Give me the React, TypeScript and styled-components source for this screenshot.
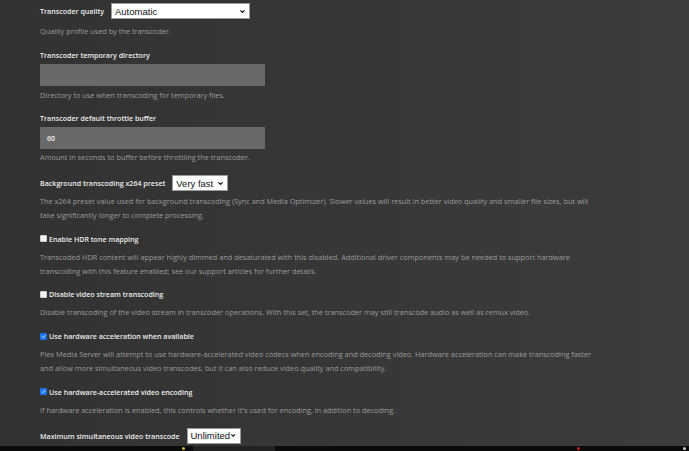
import styled, { createGlobalStyle } from 'styled-components';
import { ChevronDown } from 'lucide-react';

const GlobalStyle = createGlobalStyle`
  html, body {
    margin: 0;
    padding: 0;
    height: 100%;
  }
  body {
    background: #333;
    font-family: "Open Sans", "Noto Sans", sans-serif;
  }
  #root {
    height: 100%;
  }
`;

interface SelectProps {
  value: string;
  width: number;
}

function Select({ value, width }: SelectProps) {
  return (
    <SelectBox $width={width}>
      <span>{value}</span>
      <ChevronDown size={7} strokeWidth={4} color="#111" />
    </SelectBox>
  );
}

interface CheckProps {
  checked?: boolean;
}

function Check({ checked }: CheckProps) {
  return (
    <CheckBox $checked={checked}>
      {checked && (
        <svg width="7" height="7" viewBox="0 0 10 10">
          <path d="M2 5.2 L4.2 7.4 L8.2 2.6" fill="none" stroke="#fff" strokeWidth="1.8" />
        </svg>
      )}
    </CheckBox>
  );
}

export default function App() {
  return (
    <>
      <GlobalStyle />
      <Screen>
        <Content>
          <Group>
            <InlineRow>
              <Label>Transcoder quality</Label>
              <Select value="Automatic" width={139} />
            </InlineRow>
            <Help $top={5}>Quality profile used by the transcoder.</Help>
          </Group>

          <Group>
            <Label>Transcoder temporary directory</Label>
            <TextField />
            <Help $top={2}>Directory to use when transcoding for temporary files.</Help>
          </Group>

          <Group>
            <Label>Transcoder default throttle buffer</Label>
            <TextField>60</TextField>
            <Help $top={1}>Amount in seconds to buffer before throttling the transcoder.</Help>
          </Group>

          <Group>
            <InlineRow>
              <Label>Background transcoding x264 preset</Label>
              <Select value="Very fast" width={56} />
            </InlineRow>
            <Help $top={3}>
              The x264 preset value used for background transcoding (Sync and Media Optimizer). Slower values
              will result in better video quality and smaller file sizes, but will take significantly longer to
              complete processing.
            </Help>
          </Group>

          <Group>
            <CheckRow>
              <Check />
              <Label>Enable HDR tone mapping</Label>
            </CheckRow>
            <Help $top={5}>
              Transcoded HDR content will appear highly dimmed and desaturated with this disabled. Additional
              driver components may be needed to support hardware transcoding with this feature enabled; see
              our support articles for further details.
            </Help>
          </Group>

          <Group>
            <CheckRow>
              <Check />
              <Label>Disable video stream transcoding</Label>
            </CheckRow>
            <Help $top={5}>
              Disable transcoding of the video stream in transcoder operations. With this set, the transcoder
              may still transcode audio as well as remux video.
            </Help>
          </Group>

          <Group>
            <CheckRow>
              <Check checked />
              <Label>Use hardware acceleration when available</Label>
            </CheckRow>
            <Help $top={5}>
              Plex Media Server will attempt to use hardware-accelerated video codecs when encoding and
              decoding video. Hardware acceleration can make transcoding faster and allow more simultaneous
              video transcodes, but it can also reduce video quality and compatibility.
            </Help>
          </Group>

          <Group>
            <CheckRow>
              <Check checked />
              <Label>Use hardware-accelerated video encoding</Label>
            </CheckRow>
            <Help $top={5}>
              If hardware acceleration is enabled, this controls whether it's used for encoding, in addition to
              decoding.
            </Help>
          </Group>

          <Group>
            <InlineRow>
              <Label>Maximum simultaneous video transcode</Label>
              <Select value="Unlimited" width={54} />
            </InlineRow>
          </Group>
        </Content>

        <Taskbar>
          <TaskDot $color="#d8b53a" $left={182} />
          <TaskItem />
          <TaskDot $color="#c8252a" $left={577} />
          <TaskDot $color="#cfcfcf" $left={683} />
        </Taskbar>
      </Screen>
    </>
  );
}

const Screen = styled.div`
  display: flex;
  flex-direction: column;
  height: 100vh;
  overflow: hidden;
  background: linear-gradient(90deg, #323232 0%, #383838 60%, #3c3c3c 100%);
`;

const Content = styled.div`
  flex: 1;
  display: flex;
  flex-direction: column;
  gap: 10.7px;
  padding: 3px 0 0 40px;
  min-height: 0;
`;

const Group = styled.div`
  display: flex;
  flex-direction: column;
`;

const InlineRow = styled.div`
  display: flex;
  align-items: center;
  gap: 7px;
  height: 16px;
`;

const CheckRow = styled.div`
  display: flex;
  align-items: center;
  gap: 2px;
  height: 12px;
`;

const Label = styled.span`
  color: #ececec;
  font-size: 7.1px;
  font-weight: 600;
  line-height: 12px;
  white-space: nowrap;
`;

const Help = styled.p<{ $top: number }>`
  margin: ${({ $top }) => $top}px 0 0;
  max-width: 556px;
  color: #9b9b9b;
  font-size: 7.34px;
  line-height: 14px;
`;

const SelectBox = styled.div<{ $width: number }>`
  box-sizing: border-box;
  display: flex;
  align-items: center;
  justify-content: space-between;
  width: ${({ $width }) => $width}px;
  height: 16px;
  padding: 0 3px;
  background: #fff;
  border: 1px solid #9a9a9a;
  color: #111;
  font-family: "Liberation Sans", Arial, sans-serif;
  font-size: 9.5px;
`;

const TextField = styled.div`
  box-sizing: border-box;
  display: flex;
  align-items: center;
  width: 225px;
  height: 22px;
  margin-top: 3px;
  padding: 0 7px;
  background: #696969;
  color: #f0f0f0;
  font-size: 7.1px;
  font-weight: 600;
`;

const CheckBox = styled.span<{ $checked?: boolean }>`
  box-sizing: border-box;
  display: inline-flex;
  align-items: center;
  justify-content: center;
  width: 7px;
  height: 7px;
  border-radius: 1px;
  background: ${({ $checked }) => ($checked ? '#1a73e8' : '#f4f4f4')};
  border: 1px solid ${({ $checked }) => ($checked ? '#1a73e8' : '#cfcfcf')};
`;

const Taskbar = styled.div`
  position: relative;
  flex: 0 0 5px;
  background: #0b0b0b;
`;

const TaskItem = styled.div`
  position: absolute;
  left: 193px;
  top: 0;
  width: 82px;
  height: 5px;
  background: #222;
`;

const TaskDot = styled.span<{ $color: string; $left: number }>`
  position: absolute;
  top: 1px;
  left: ${({ $left }) => $left}px;
  width: 3px;
  height: 3px;
  border-radius: 50%;
  background: ${({ $color }) => $color};
`;
